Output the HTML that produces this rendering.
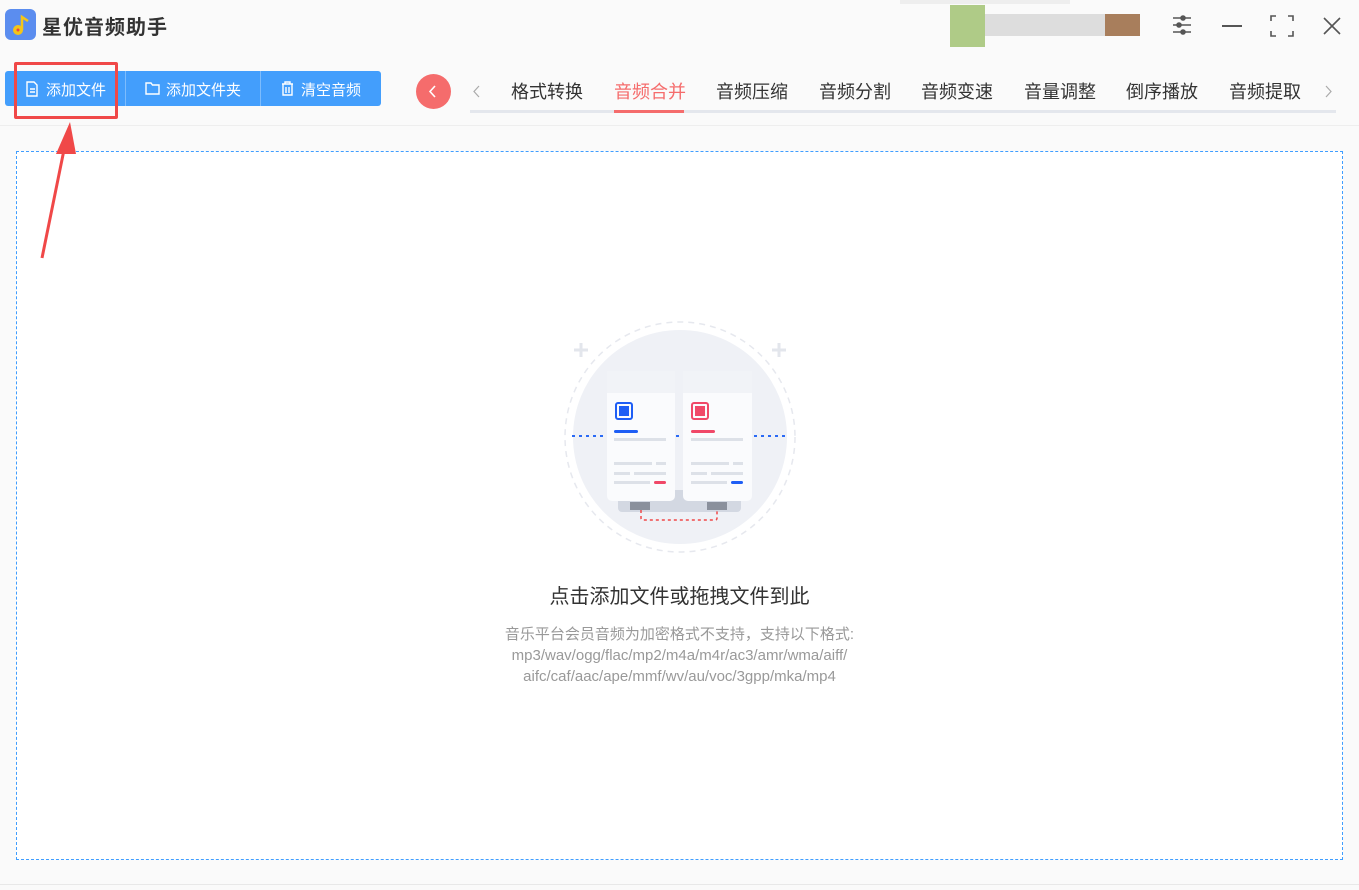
<!DOCTYPE html>
<html><head><meta charset="utf-8"><style>
body{margin:0;width:1359px;height:890px;background:#fafafa;font-family:"Liberation Sans","Noto Sans CJK SC",sans-serif;position:relative;overflow:hidden}
.abs{position:absolute}
.tab{position:absolute;top:78px;font-size:18px;color:#333}
</style></head><body>
<div class="abs" style="left:5px;top:9px;width:31px;height:31px;border-radius:6px;background:#5b8def"></div>
<svg class="abs" style="left:5px;top:9px" width="31" height="31"><circle cx="13" cy="21" r="5" fill="#f5c518"/><circle cx="13" cy="21" r="1.5" fill="#e44"/><path d="M17 21V8l6 4" stroke="#f5c518" stroke-width="2.5" fill="none"/></svg>
<div class="abs" style="left:42px;top:11px;font-size:20px;font-weight:bold;color:#333;letter-spacing:1px">星优音频助手</div>
<div class="abs" style="left:900px;top:0;width:170px;height:4px;background:#eee"></div>
<div class="abs" style="left:950px;top:5px;width:35px;height:42px;background:#9cbf6a;opacity:.8"></div>
<div class="abs" style="left:985px;top:14px;width:120px;height:22px;background:#ddd"></div>
<div class="abs" style="left:1105px;top:14px;width:35px;height:22px;background:#a87e5c"></div>
<svg class="abs" style="left:1170px;top:13px" width="24" height="24" stroke="#555" stroke-width="1.6" fill="#555"><path d="M3 5h18M3 12h18M3 19h18"/><circle cx="13" cy="5" r="2"/><circle cx="9" cy="12" r="2"/><circle cx="13" cy="19" r="2"/></svg>
<div class="abs" style="left:1222px;top:25px;width:20px;height:1.6px;background:#555"></div>
<svg class="abs" style="left:1270px;top:15px" width="24" height="22" stroke="#555" stroke-width="1.6" fill="none"><path d="M1 6V1h5M18 1h5v5M23 16v5h-5M6 21H1v-5"/></svg>
<svg class="abs" style="left:1322px;top:16px" width="20" height="20" stroke="#555" stroke-width="1.6"><path d="M2 2l16 16M18 2L2 18"/></svg>
<div class="abs" style="left:5px;top:71px;width:376px;height:35px;background:#439efc;border-radius:3px"></div>
<div class="abs" style="left:125px;top:71px;width:1px;height:35px;background:#7dbcfd"></div>
<div class="abs" style="left:260px;top:71px;width:1px;height:35px;background:#7dbcfd"></div>
<div class="abs" style="left:46px;top:79px;color:#fff;font-size:15px">添加文件</div>
<div class="abs" style="left:166px;top:79px;color:#fff;font-size:15px">添加文件夹</div>
<div class="abs" style="left:301px;top:79px;color:#fff;font-size:15px">清空音频</div>
<svg class="abs" style="left:25px;top:81px" width="14" height="16" stroke="#fff" fill="none" stroke-width="1.4"><path d="M2 1h7l3 3v11H2zM5 8h5M5 11h5"/></svg>
<svg class="abs" style="left:145px;top:82px" width="15" height="13" stroke="#fff" fill="none" stroke-width="1.4"><path d="M1 1h5l1.5 2H14v9H1z"/></svg>
<svg class="abs" style="left:281px;top:81px" width="13" height="15" stroke="#fff" fill="none" stroke-width="1.4"><path d="M1 3h11M4 3V1h5v2M2 3v11h9V3M5 6v6M8 6v6"/></svg>
<div class="abs" style="left:416px;top:74px;width:35px;height:35px;border-radius:50%;background:#f56c6c"></div>
<svg class="abs" style="left:427px;top:84px" width="12" height="15" stroke="#fff" stroke-width="1.6" fill="none"><path d="M8 2L3 7.5 8 13"/></svg>
<svg class="abs" style="left:472px;top:84px" width="10" height="15" stroke="#aaa" stroke-width="1.2" fill="none"><path d="M7 2L2 7.5 7 13"/></svg>
<svg class="abs" style="left:1323px;top:84px" width="10" height="15" stroke="#aaa" stroke-width="1.2" fill="none"><path d="M3 2l5 5.5L3 13"/></svg>
<div class="tab" style="left:511px">格式转换</div>
<div class="tab" style="left:614px;color:#f56c6c">音频合并</div>
<div class="tab" style="left:716px">音频压缩</div>
<div class="tab" style="left:819px">音频分割</div>
<div class="tab" style="left:921px">音频变速</div>
<div class="tab" style="left:1024px">音量调整</div>
<div class="tab" style="left:1126px">倒序播放</div>
<div class="tab" style="left:1229px">音频提取</div>
<div class="abs" style="left:470px;top:110px;width:866px;height:3px;background:#e4e7ed"></div>
<div class="abs" style="left:614px;top:110px;width:70px;height:3px;background:#f56c6c"></div>
<div class="abs" style="left:0;top:125px;width:1359px;height:1px;background:#eee"></div>
<div class="abs" style="left:16px;top:151px;width:1325px;height:707px;border:1px dashed #409eff;background:#fff"></div>
<svg class="abs" style="left:550px;top:310px" width="260" height="250">
<circle cx="130" cy="127" r="115" fill="none" stroke="#e6e8ee" stroke-dasharray="6 5" stroke-width="1.5"/>
<circle cx="130" cy="127" r="107" fill="#eff1f6"/>
<path d="M24 40h14M31 33v14M222 40h14M229 33v14" stroke="#e3e6ec" stroke-width="3"/>
<rect x="68" y="180" width="123" height="22" rx="4" fill="#d3d8e2"/>
<rect x="80" y="192" width="20" height="8" fill="#8a909c"/><rect x="157" y="192" width="20" height="8" fill="#8a909c"/>
<path d="M91 200v8q0 2 2 2h72q2 0 2-2v-8" stroke="#f04848" stroke-dasharray="3 3" fill="none" stroke-width="1.5"/>
<path d="M22 126h34M126 126h8M204 126h34" stroke="#2a6af5" stroke-dasharray="3 4" stroke-width="2"/>
<rect x="57" y="61" width="68" height="130" rx="5" fill="#fafbfd"/><rect x="57" y="61" width="68" height="22" fill="#f1f3f7"/>
<rect x="133" y="61" width="69" height="130" rx="5" fill="#fafbfd"/><rect x="133" y="61" width="69" height="22" fill="#f1f3f7"/>
<rect x="66" y="93" width="16" height="16" rx="2" fill="none" stroke="#1e5ef5" stroke-width="2"/><rect x="69" y="96" width="10" height="10" fill="#1e5ef5"/>
<rect x="142" y="93" width="16" height="16" rx="2" fill="none" stroke="#f04868" stroke-width="2"/><rect x="145" y="96" width="10" height="10" fill="#f04868"/>
<rect x="64" y="120" width="24" height="3" rx="1.5" fill="#1e5ef5"/><rect x="141" y="120" width="24" height="3" rx="1.5" fill="#f04868"/>
<g fill="#dde1e8"><rect x="64" y="128" width="52" height="3"/><rect x="141" y="128" width="52" height="3"/>
<rect x="64" y="152" width="38" height="3"/><rect x="106" y="152" width="10" height="3"/><rect x="141" y="152" width="38" height="3"/><rect x="183" y="152" width="10" height="3"/>
<rect x="64" y="162" width="16" height="3"/><rect x="84" y="162" width="32" height="3"/><rect x="141" y="162" width="16" height="3"/><rect x="161" y="162" width="32" height="3"/>
<rect x="64" y="171" width="36" height="3"/><rect x="141" y="171" width="36" height="3"/></g>
<rect x="104" y="171" width="12" height="3" rx="1.5" fill="#f04868"/><rect x="181" y="171" width="12" height="3" rx="1.5" fill="#1e5ef5"/>
</svg>
<div class="abs" style="left:0;width:1359px;top:580px;text-align:center;font-size:20px;color:#333">点击添加文件或拖拽文件到此</div>
<div class="abs" style="left:0;width:1359px;top:624px;text-align:center;font-size:15px;color:#999;line-height:21px">音乐平台会员音频为加密格式不支持，支持以下格式:<br>mp3/wav/ogg/flac/mp2/m4a/m4r/ac3/amr/wma/aiff/<br>aifc/caf/aac/ape/mmf/wv/au/voc/3gpp/mka/mp4</div>
<div class="abs" style="left:0;top:884px;width:1359px;height:1px;background:#e8e8e8"></div>
<div class="abs" style="left:14px;top:62px;width:98px;height:51px;border:3px solid #f04848;border-radius:2px"></div>
<svg class="abs" style="left:30px;top:118px" width="50" height="145"><path d="M12 140L36 22" stroke="#f04848" stroke-width="3"/><path d="M40 4L26 36L46 36Z" fill="#f04848"/></svg>
</body></html>
